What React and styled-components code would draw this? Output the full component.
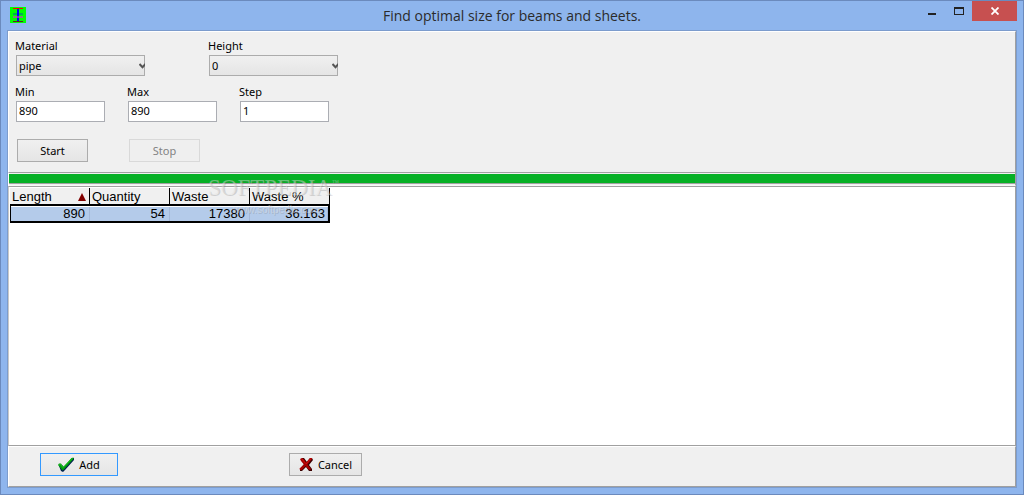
import { useState } from "react";
import styled, { createGlobalStyle } from "styled-components";

const GlobalStyle = createGlobalStyle`
  * {
    box-sizing: border-box;
  }
  body {
    margin: 0;
    font-family: "Noto Sans", "Open Sans", sans-serif;
    font-size: 11px;
    color: #000;
  }
  button,
  input,
  select {
    font: inherit;
    color: inherit;
  }
`;

const S = {
  Window: styled.div`
    display: flex;
    flex-direction: column;
    min-height: 100vh;
    padding: 0 6px;
    border: 1px solid #6b8abd;
    background: #8eb5ed;
  `,
  TitleBar: styled.header`
    display: grid;
    grid-template-columns: 120px 1fr 120px;
    height: 29px;
  `,
  AppIcon: styled.svg`
    margin: 6px 3px;
  `,
  Title: styled.h1`
    margin: 0;
    font-family: "Open Sans", "Noto Sans", sans-serif;
    font-size: 14px;
    font-weight: 400;
    line-height: 29px;
    text-align: center;
    color: #2b2b2b;
  `,
  Controls: styled.div`
    display: flex;
    justify-content: flex-end;
    align-items: flex-start;
  `,
  Control: styled.button`
    display: flex;
    width: ${({ $close }) => ($close ? "45px" : "27px")};
    height: 20px;
    padding: 0;
    border: 0;
    align-items: center;
    justify-content: center;
    background: ${({ $close }) => ($close ? "#c75050" : "transparent")};
  `,
  Client: styled.main`
    display: flex;
    flex: 1;
    flex-direction: column;
    margin-bottom: 6px;
    border: 1px solid #7c9ccd;
    background: #f0f0f0;
  `,
  Form: styled.form`
    height: 142px;
    padding: 7px 6px;
    border: 1px solid #a0a0a0;
    border-top-color: #fff;
    border-left-color: #fff;
  `,
  Row: styled.div`
    display: flex;
    gap: ${({ $gap }) => $gap};
    margin-bottom: ${({ $bottom }) => $bottom || "0"};
    padding-left: ${({ $inset }) => $inset || "0"};
  `,
  Field: styled.div`
    display: flex;
    flex-direction: column;
    gap: 3px;
    width: ${({ $width }) => $width};
  `,
  Label: styled.label`
    line-height: 13px;
  `,
  SelectBox: styled.div`
    position: relative;
    margin-left: 1px;
    svg {
      position: absolute;
      top: 8px;
      right: 0;
      pointer-events: none;
    }
  `,
  Select: styled.select`
    display: block;
    width: 100%;
    height: 21px;
    padding: 0 2px;
    appearance: none;
    border: 1px solid #acacac;
    border-radius: 0;
    background: linear-gradient(#f0f0f0, #e5e5e5);
  `,
  Input: styled.input`
    height: 21px;
    margin-left: 1px;
    padding: 0 2px 2px;
    border: 1px solid #abadb3;
    background: #fff;
  `,
  Button: styled.button`
    display: flex;
    align-items: center;
    justify-content: center;
    gap: 5px;
    width: ${({ $width }) => $width};
    height: 23px;
    padding: 0;
    border: 1px solid ${({ $primary }) => ($primary ? "#3399ff" : "#acacac")};
    background: linear-gradient(#f0f0f0, #e5e5e5);
    &:disabled {
      border-color: #d9d9d9;
      background: #efefef;
      color: #838383;
    }
  `,
  Progress: styled.div`
    height: 13px;
    padding: 1px 0 2px;
    border-left: 1px solid #fff;
    border-right: 1px solid #a0a0a0;
    border-bottom: 1px solid #f8f8f8;
  `,
  ProgressBar: styled.div`
    width: ${({ $value }) => $value}%;
    height: 10px;
    border-bottom: 1px solid #a0a0a0;
    background: #06b025;
  `,
  Results: styled.section`
    position: relative;
    flex: 1;
    padding: 1px;
    border: 1px solid #a0a0a0;
    border-left-color: #c8c8c8;
    background: #fff;
  `,
  Table: styled.table`
    width: 320px;
    table-layout: fixed;
    border-collapse: separate;
    border-spacing: 0;
    font-family: "Liberation Sans", Arial, sans-serif;
    font-size: 13px;
    line-height: 14px;
  `,
  Th: styled.th`
    height: 16px;
    padding: 1px 3px 0 2px;
    border-right: 1px solid #000;
    background: #f0f0f0;
    font-weight: 400;
    text-align: left;
    svg {
      float: right;
      margin-top: 3px;
    }
  `,
  Tr: styled.tr`
    td {
      height: 18px;
      padding: 1px 5px 0 0;
      border: 0 solid #000;
      border-width: 2px 0;
      background: #b4cbea;
      box-shadow: inset 0 1px #fff, inset -1px 0 #a4b8d8;
      text-align: right;
    }
    td:first-child {
      border-left-width: 1px;
    }
    td:last-child {
      padding-right: 3px;
      border-right-width: 2px;
    }
  `,
  Watermark: styled.div`
    position: absolute;
    top: -10px;
    left: 199px;
    font-family: "Liberation Serif", serif;
    font-size: 23px;
    line-height: 22px;
    white-space: nowrap;
    color: rgba(225, 225, 225, 0.45);
    text-shadow: 1px 1px rgba(110, 110, 110, 0.25);
    pointer-events: none;
    sup {
      font-size: 7px;
      line-height: 7px;
      vertical-align: 10px;
    }
    small {
      display: block;
      padding-left: 25px;
      font-family: "Liberation Sans", sans-serif;
      font-size: 10px;
    }
  `,
  Footer: styled.footer`
    display: flex;
    gap: 171px;
    height: 41px;
    padding: 6px 31px;
    border: 1px solid #a0a0a0;
    border-top-color: #fff;
    border-left-color: #fff;
  `,
};

const columns = ["Length", "Quantity", "Waste", "Waste %"];
const rows = [["890", "54", "17380", "36.163"]];

const BeamIcon = () => (
  <S.AppIcon width="16" height="16" viewBox="0 0 16 16" shapeRendering="crispEdges">
    <path fill="#00ff00" d="M0 0h16v16H0z" />
    <path fill="#00b050" d="M3 6h10v2H3z" />
    <path fill="#808080" d="M3 9h10v2H3z" />
    <path fill="#0000ff" d="M7 1h2v14H7z" />
    <path fill="#9020d0" d="M7 9h2v2H7z" />
    <path fill="#ff0000" d="M3 1h10v1H3z" />
    <path fill="#602020" d="M3 14h10v1H3z" />
  </S.AppIcon>
);

const Chevron = () => (
  <svg width="6" height="6" viewBox="0 0 6 6">
    <path d="M0.5 1L3.5 4.2L6.5 1" fill="none" stroke="#555" strokeWidth="2" />
  </svg>
);

const CheckIcon = () => (
  <svg width="16" height="15" viewBox="0 0 16 15">
    <path fill="#001c50" d="M1 9l3-1 2 2L14 1h2v2L7 13l-2 2-2-1z" />
    <path fill="#009a10" d="M0 8l1-1.500h2L5.500 10 13.500 1l2-.5V2L6 12.500 4.500 13.500z" />
    <path fill="none" stroke="#20c820" d="M1 8l1.500-.5L5 10.500 14.500 1" />
  </svg>
);

const CrossIcon = () => (
  <svg width="14" height="15" viewBox="0 0 14 15">
    <path fill="#3c0000" d="M3 1h2l3 4 3-4h2l1 2-4 5 3 4v2h-3l-3-4-4 4H1v-2l4-5-3-4z" />
    <path fill="#a80000" d="M1 2l2-1 1.500 1L7 5.500 11 1h2v1L8.500 7.500 12 12l-1 1-1.500-.5L6.500 9 3 13H1l-.5-1.500L5 7.500 2 4z" />
    <path fill="none" stroke="#cc1010" d="M3 2l3.500 4.500M12 1.500L7 7" />
  </svg>
);

const SelectField = ({ id, label, options }) => (
  <S.Field $width="130px">
    <S.Label htmlFor={id}>{label}</S.Label>
    <S.SelectBox>
      <S.Select id={id}>
        {options.map((option) => (
          <option key={option}>{option}</option>
        ))}
      </S.Select>
      <Chevron />
    </S.SelectBox>
  </S.Field>
);

const TextField = ({ id, label, initial }) => {
  const [value, setValue] = useState(initial);

  return (
    <S.Field $width="90px">
      <S.Label htmlFor={id}>{label}</S.Label>
      <S.Input id={id} value={value} onChange={(e) => setValue(e.target.value)} />
    </S.Field>
  );
};

export default function App() {
  return (
    <>
      <GlobalStyle />
      <S.Window>
        <S.TitleBar>
          <BeamIcon />
          <S.Title>Find optimal size for beams and sheets.</S.Title>
          <S.Controls>
            <S.Control aria-label="Minimize">
              <svg width="10" height="10" shapeRendering="crispEdges">
                <path fill="#222" d="M1 7h8v2H1z" />
              </svg>
            </S.Control>
            <S.Control aria-label="Maximize">
              <svg width="10" height="8" shapeRendering="crispEdges">
                <path fill="#222" fillRule="evenodd" d="M0 0h10v8H0zM1 2v5h8V2z" />
              </svg>
            </S.Control>
            <S.Control $close aria-label="Close">
              <svg width="8" height="8" viewBox="0 0 8 8">
                <path d="M.5 .5l7 7M7.500 .5l-7 7" stroke="#fff" strokeWidth="1.800" />
              </svg>
            </S.Control>
          </S.Controls>
        </S.TitleBar>
        <S.Client>
          <S.Form onSubmit={(e) => e.preventDefault()}>
            <S.Row $gap="63px" $bottom="9px">
              <SelectField id="material" label="Material" options={["pipe"]} />
              <SelectField id="height" label="Height" options={["0"]} />
            </S.Row>
            <S.Row $gap="22px" $bottom="17px">
              <TextField id="min" label="Min" initial="890" />
              <TextField id="max" label="Max" initial="890" />
              <TextField id="step" label="Step" initial="1" />
            </S.Row>
            <S.Row $gap="41px" $inset="2px">
              <S.Button type="submit" $width="71px">Start</S.Button>
              <S.Button type="button" $width="71px" disabled>Stop</S.Button>
            </S.Row>
          </S.Form>
          <S.Progress role="progressbar" aria-label="Progress" aria-valuenow={100}>
            <S.ProgressBar $value={100} />
          </S.Progress>
          <S.Results>
            <S.Table>
              <thead>
                <tr>
                  {columns.map((column, i) => (
                    <S.Th key={column}>
                      {i === 0 && (
                        <svg width="8" height="8">
                          <path fill="#800000" d="M4 0l4 8H0z" />
                        </svg>
                      )}
                      {column}
                    </S.Th>
                  ))}
                </tr>
              </thead>
              <tbody>
                {rows.map((row) => (
                  <S.Tr key={row[0]}>
                    {row.map((cell, i) => (
                      <td key={columns[i]}>{cell}</td>
                    ))}
                  </S.Tr>
                ))}
              </tbody>
            </S.Table>
            <S.Watermark>
              SOFTPEDIA<sup>™</sup>
              <small>www.softpedia.com</small>
            </S.Watermark>
          </S.Results>
          <S.Footer>
            <S.Button type="button" $width="78px" $primary>
              <CheckIcon />
              Add
            </S.Button>
            <S.Button type="button" $width="73px">
              <CrossIcon />
              Cancel
            </S.Button>
          </S.Footer>
        </S.Client>
      </S.Window>
    </>
  );
}
